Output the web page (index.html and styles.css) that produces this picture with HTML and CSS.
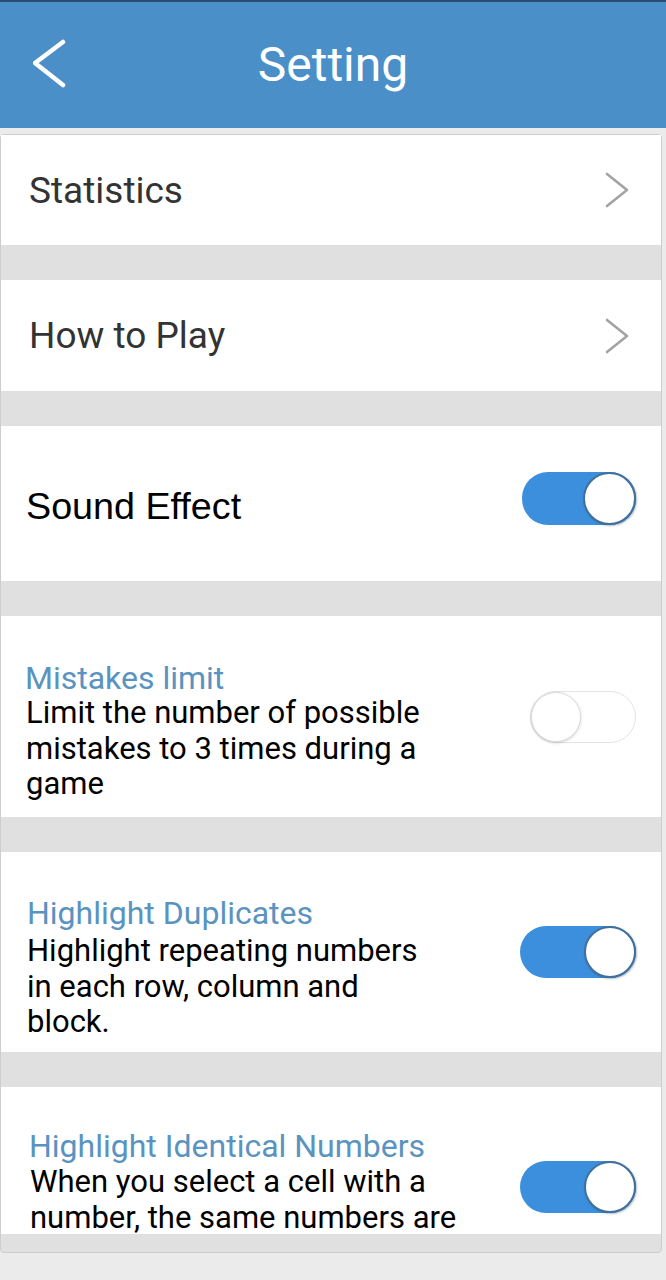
FILE: index.html
```html
<!DOCTYPE html>
<html>
<head>
    <meta charset='utf-8'>
    <title>Setting</title>
    <meta name='viewport' content='width=device-width, initial-scale=1'>
    <link rel="stylesheet" href="styles.css">
</head>
<body>
<header class="topbar">
    <a class="back" href="#">
        <svg width="40" height="52" viewBox="0 0 40 52">
            <polyline points="30,4 2,25 30,47" fill="none" stroke="#fff" stroke-width="4.5" stroke-linecap="round" stroke-linejoin="round"/>
        </svg>
    </a>
    <h1 class="title">Setting</h1>
    <span></span>
</header>

<div class="panel">
    <div class="list">
        <a class="card card-link" href="#">
            <span class="link-text">Statistics</span>
            <svg class="chev" width="26" height="36" viewBox="0 0 26 36">
                <polyline points="4,2 24,18 4,34" fill="none" stroke="#a3a3a3" stroke-width="2.6" stroke-linecap="round" stroke-linejoin="round"/>
            </svg>
        </a>
        <a class="card card-link card-link2" href="#">
            <span class="link-text">How to Play</span>
            <svg class="chev" width="26" height="36" viewBox="0 0 26 36">
                <polyline points="4,2 24,18 4,34" fill="none" stroke="#a3a3a3" stroke-width="2.6" stroke-linecap="round" stroke-linejoin="round"/>
            </svg>
        </a>
        <div class="card card-sound">
            <span class="sound-text">Sound Effect</span>
            <div class="toggle on"><div class="knob"></div></div>
        </div>
        <div class="card card-option opt-mistakes">
            <div class="opt-text">
                <div class="opt-title">Mistakes limit</div>
                <div class="opt-desc">Limit the number of possible mistakes to 3 times during a game</div>
            </div>
            <div class="toggle off"><div class="knob"></div></div>
        </div>
        <div class="card card-option opt-dupes">
            <div class="opt-text">
                <div class="opt-title">Highlight Duplicates</div>
                <div class="opt-desc">Highlight repeating numbers in each row, column and block.</div>
            </div>
            <div class="toggle on"><div class="knob"></div></div>
        </div>
        <div class="card card-option opt-identical">
            <div class="opt-text">
                <div class="opt-title">Highlight Identical Numbers</div>
                <div class="opt-desc">When you select a cell with a number, the same numbers are</div>
            </div>
            <div class="toggle on"><div class="knob"></div></div>
        </div>
    </div>
</div>
</body>
</html>
```

FILE: styles.css
```css
html {
    background-color: #ebebeb;
}

body {
    margin: 0;
    width: 666px;
    height: 1280px;
    overflow: hidden;
    font-family: Roboto, "Liberation Sans", sans-serif;
}

.topbar {
    display: grid;
    grid-template-columns: 1fr auto 1fr;
    align-items: center;
    height: 126px;
    background-color: #4a8fc7;
    border-top: 2px solid #2c4d6f;
}

.back {
    display: flex;
    padding-left: 33px;
    padding-bottom: 2px;
}

.title {
    margin: 0;
    color: #fff;
    font-weight: normal;
    font-size: 48px;
    line-height: 56px;
}

.panel {
    margin-top: 6px;
    width: 660px;
    background-color: #e0e0e0;
    border: 1px solid #cdcdcd;
    border-radius: 4px;
    padding-bottom: 18px;
}

.list {
    display: flex;
    flex-direction: column;
    gap: 35px;
    height: 1099px;
    overflow: hidden;
}

.card {
    display: flex;
    align-items: center;
    background-color: #fff;
    text-decoration: none;
    flex-shrink: 0;
}

.card-link {
    height: 110px;
    padding: 0 32px 0 28px;
    justify-content: space-between;
}
.card-link2 {
    height: 111px;
}

.link-text {
    color: #333;
    font-size: 37px;
}

.card-sound {
    height: 155px;
    padding-left: 25px;
}

.sound-text {
    font-family: "Liberation Sans", Arial, sans-serif;
    font-size: 37.7px;
    color: #000;
    padding-top: 6px;
}

.card-option {
    height: 200px;
    padding-left: 26px;
}
.opt-mistakes {
    height: 201px;
    padding-left: 24px;
}

.opt-text {
    align-self: flex-start;
    padding-top: 49px;
    width: 410px;
}
.opt-mistakes .opt-text {
    padding-top: 50px;
}
.opt-identical .opt-text {
    width: 450px;
    padding-top: 47px;
    padding-left: 3px;
}

.opt-title {
    color: #5a93c0;
    font-size: 32px;
    line-height: 24px;
}
.opt-identical .opt-title {
    margin-left: -1px;
}

.opt-desc {
    color: #000;
    font-size: 31px;
    line-height: 35.5px;
}
.opt-mistakes .opt-desc {
    margin-top: 5px;
    padding-left: 1px;
}
.opt-dupes .opt-desc {
    margin-top: 8px;
}
.opt-identical .opt-desc {
    margin-top: 6px;
}

/* switches */
.toggle {
    display: flex;
    box-sizing: border-box;
    width: 116px;
    height: 52px;
    margin-left: auto;
    margin-right: 25px;
    border-radius: 26px;
}
.toggle.on {
    background-color: #3b8fdc;
    justify-content: flex-end;
}
.card-sound .toggle {
    width: 114px;
    height: 53px;
    margin-bottom: 10px;
}
.toggle.off {
    background-color: #fff;
    border: 1px solid #e4e4e4;
    width: 106px;
}
.knob {
    box-sizing: border-box;
    width: 52px;
    height: 52px;
    border-radius: 50%;
    background-color: #fff;
}
.toggle.on .knob {
    border: 2px solid #40709c;
    box-shadow: 1px 1px 2px rgba(30, 60, 90, 0.35);
}
.card-sound .knob {
    width: 53px;
    height: 53px;
}
.toggle.off .knob {
    width: 50px;
    height: 50px;
    border: 1px solid #dcdcdc;
    box-shadow: 0 1px 3px rgba(0, 0, 0, 0.18);
}
```
